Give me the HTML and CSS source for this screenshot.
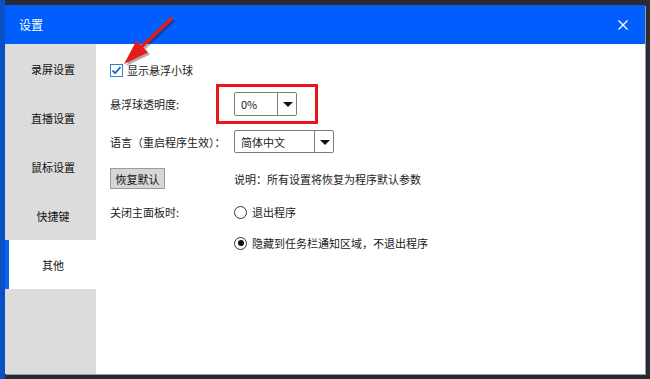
FILE: index.html
```html
<!DOCTYPE html>
<html lang="zh-CN">
<head>
  <meta charset="UTF-8">
  <title>设置</title>
  <link rel="stylesheet" href="styles.css">
</head>
<body>
  <div class="desktop">
    <div class="window">
      <div class="titlebar">
        <span class="title">设置</span>
        <svg class="close" width="10" height="10" viewBox="0 0 10 10">
          <path d="M0.5 0.5 L9.5 9.5 M9.5 0.5 L0.5 9.5" stroke="#fff" stroke-width="1.3"/>
        </svg>
      </div>

      <div class="main">
        <nav class="sidebar">
          <div class="item">录屏设置</div>
          <div class="item">直播设置</div>
          <div class="item">鼠标设置</div>
          <div class="item">快捷键</div>
          <div class="item active">其他</div>
        </nav>

        <div class="panel">
          <div class="row row-check">
            <svg class="checkbox" width="13" height="13" viewBox="0 0 13 13">
              <rect x="0.5" y="0.5" width="12" height="12" fill="#fff" stroke="#2f7fd8"/>
              <path d="M2.5 6.5 L5.2 9.2 L10.5 3.2" fill="none" stroke="#1e6fd0" stroke-width="1.8"/>
            </svg>
            <span>显示悬浮小球</span>
          </div>

          <div class="row row-opacity">
            <span class="label">悬浮球透明度:</span>
            <div class="combo combo-small">
              <span class="value">0%</span>
              <span class="drop"></span>
            </div>
          </div>

          <div class="row row-lang">
            <span class="label">语言（重启程序生效）：</span>
            <div class="combo combo-wide">
              <span class="value">简体中文</span>
              <span class="drop"></span>
            </div>
          </div>

          <div class="row row-reset">
            <span class="label"><button class="reset">恢复默认</button></span>
            <span>说明：所有设置将恢复为程序默认参数</span>
          </div>

          <div class="row row-close">
            <span class="label">关闭主面板时:</span>
            <span class="radio"></span>
            <span>退出程序</span>
          </div>

          <div class="row row-hide">
            <span class="label"></span>
            <span class="radio checked"></span>
            <span>隐藏到任务栏通知区域，不退出程序</span>
          </div>

          <div class="highlight"></div>
        </div>
      </div>

      <!-- 标注箭头 -->
      <svg class="arrow" width="200" height="80" viewBox="0 0 200 80">
        <g transform="translate(2,2)" fill="#3a1010" opacity="0.35">
          <path d="M172 18 L139 49" stroke="#3a1010" stroke-width="3.5"/>
          <path d="M124 64 L136.5 40.4 L148.1 52.4 Z"/>
        </g>
        <path d="M172 18 L139 49" stroke="#e51c1c" stroke-width="3.5"/>
        <path d="M124 64 L136.5 40.4 L148.1 52.4 Z" fill="#e51c1c"/>
      </svg>
    </div>
  </div>
</body>
</html>
```

FILE: styles.css
```css
body {
  margin: 0;
  width: 650px;
  height: 379px;
  overflow: hidden;
  background: #1d1d22;
  font-family: "Noto Sans CJK SC", "Noto Sans", sans-serif;
  font-size: 11px;
  color: #1a1a1a;
}
.desktop {
  height: 379px;
  padding: 5px;
  box-sizing: border-box;
  background: linear-gradient(to right, #0b4fc4 0 5px, #2a2a30 5px);
}
.window {
  position: relative;
  width: 640px;
  height: 369px;
  background: #fff;
  box-shadow: 1px 1px 0 #9a9a9a;
}
.titlebar {
  height: 39px;
  background: #005dfe;
  color: #fff;
  display: flex;
  align-items: center;
  justify-content: space-between;
  padding: 0 17px 0 14px;
  font-size: 12px;
}
.close {
  display: block;
}
.main {
  display: flex;
  height: 330px;
}
.sidebar {
  width: 91px;
  background: #dcdcdc;
  display: flex;
  flex-direction: column;
}
.item {
  height: 49px;
  display: flex;
  align-items: center;
  justify-content: center;
  padding-left: 5px;
  color: #111;
}
.item.active {
  background: #fff;
  border-left: 4px solid #0b62f0;
  padding-left: 1px;
}
.panel {
  position: relative;
  flex: 1;
  padding-left: 14px;
  display: flex;
  flex-direction: column;
  white-space: nowrap;
}
.row {
  display: flex;
  align-items: center;
}
.label {
  width: 124px;
  flex-shrink: 0;
}
.row-check { margin-top: 14px; height: 24px; gap: 4px; }
.row-opacity { margin-top: 10px; height: 24px; }
.row-lang { margin-top: 14px; height: 23px; }
.row-reset { margin-top: 15px; height: 21px; }
.row-close { margin-top: 11px; height: 24px; }
.row-hide { margin-top: 7px; height: 24px; }

.checkbox {
  display: block;
}
.combo {
  height: 100%;
  box-sizing: border-box;
  border: 1px solid #7d7d7d;
  border-radius: 2px;
  display: flex;
  align-items: center;
  background: #fff;
}
.combo-small { width: 63px; }
.combo-wide { width: 100px; }
.combo .value {
  flex: 1;
  padding-left: 6px;
}
.combo .drop {
  width: 18px;
  height: 100%;
  border-left: 1px solid #7d7d7d;
  position: relative;
}
.combo .drop::after {
  content: "";
  position: absolute;
  left: 5px;
  top: 50%;
  margin-top: -2px;
  border-left: 5px solid transparent;
  border-right: 5px solid transparent;
  border-top: 5px solid #111;
}
.reset {
  height: 21px;
  width: 55px;
  padding: 0;
  font: inherit;
  color: #111;
  background: #d6d6d6;
  border: 1px solid #9b9b9b;
}
.radio {
  width: 11px;
  height: 11px;
  border: 1px solid #333;
  border-radius: 50%;
  margin-right: 5px;
  position: relative;
  background: #fff;
}
.radio.checked::after {
  content: "";
  position: absolute;
  left: 2.5px;
  top: 2.5px;
  width: 6px;
  height: 6px;
  border-radius: 50%;
  background: #111;
}
.highlight {
  position: absolute;
  left: 120px;
  top: 40px;
  width: 102px;
  height: 40px;
  box-sizing: border-box;
  border: 3px solid #e8151c;
}
.arrow {
  position: absolute;
  left: -5px;
  top: -5px;
  pointer-events: none;
}
```
